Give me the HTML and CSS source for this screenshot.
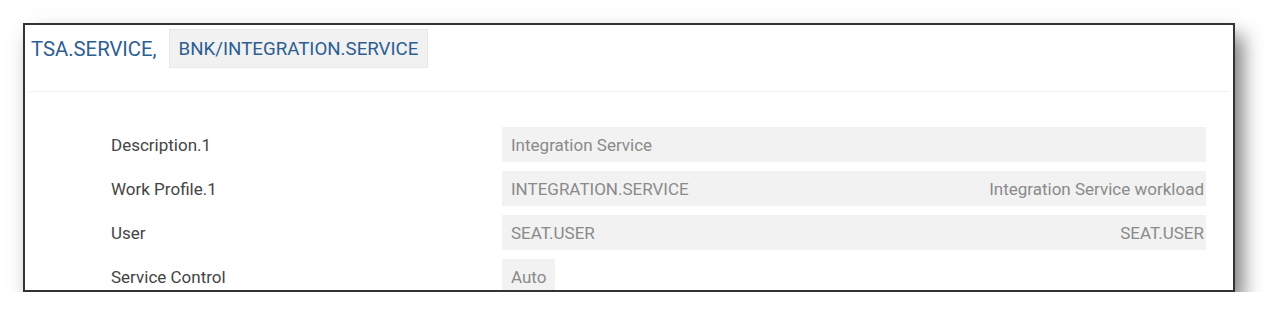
FILE: index.html
```html
<!DOCTYPE html>
<html>

<head>
    <link rel="stylesheet" href="styles.css">
</head>

<body>
    <div class="panel">
        <div class="header">
            <span class="title">TSA.SERVICE,</span>
            <span class="tab">BNK/INTEGRATION.SERVICE</span>
        </div>
        <div class="form">
            <div class="label">Description.1</div>
            <div class="value">Integration Service</div>

            <div class="label">Work Profile.1</div>
            <div class="value split">
                <span>INTEGRATION.SERVICE</span>
                <span>Integration Service workload</span>
            </div>

            <div class="label">User</div>
            <div class="value split">
                <span>SEAT.USER</span>
                <span>SEAT.USER</span>
            </div>

            <div class="label">Service Control</div>
            <div class="value short">Auto</div>
        </div>
    </div>
</body>

</html>
```

FILE: styles.css
```css
body {
    margin: 0px;
    padding: 23px 0px 0px 23px;
    background: white;
    font-family: Roboto, "Liberation Sans", sans-serif;
}

.panel {
    width: 1208px;
    height: 265px;
    border: 2px solid #333;
    background: white;
    overflow: hidden;
    box-shadow: 8px 12px 18px rgba(0, 0, 0, 0.5);
}

.header {
    display: flex;
    align-items: center;
    padding: 4px 0px 23px 3px;
    height: 39px;
    border-bottom: 1px solid #f2f2f2;
    margin: 0px 3px;
}

.title {
    color: #2d5e92;
    font-size: 20.3px;
    margin-right: 12px;
}

.tab {
    display: flex;
    align-items: center;
    height: 37px;
    padding: 0px 9px;
    background: #f1f1f1;
    border: 1px solid #e8e8e8;
    color: #2d5e92;
    font-size: 18.7px;
}

.form {
    display: grid;
    grid-template-columns: 391px 1fr;
    grid-auto-rows: 35px;
    row-gap: 9px;
    padding: 35px 27px 0px 86px;
}

.label {
    display: flex;
    align-items: center;
    color: #444;
    font-size: 17px;
}

.value {
    display: flex;
    align-items: center;
    background: #f2f2f2;
    color: #8a8a8a;
    font-size: 17px;
    padding: 0px 2px 0px 9px;
}

.split {
    justify-content: space-between;
}

.short {
    justify-self: start;
    padding-right: 9px;
}
```
